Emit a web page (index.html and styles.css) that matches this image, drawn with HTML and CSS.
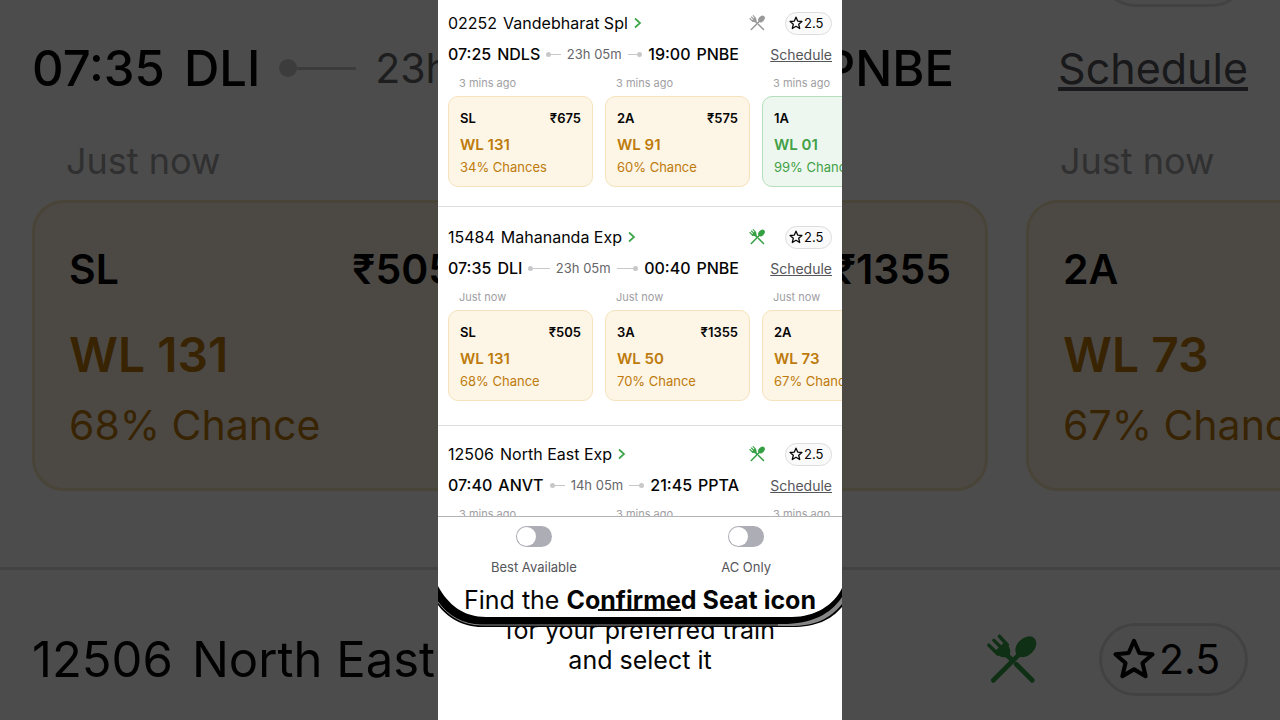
FILE: index.html
```
<!DOCTYPE html>
<html lang="en">
<head>
<meta charset="utf-8">
<title>Trains</title>
<link rel="stylesheet" href="styles.css">
</head>
<body>

<svg class="sprite" aria-hidden="true">
  <symbol id="food" viewBox="0 0 16 16">
    <path d="M.9 3.500 3.700 6.300M2.500 2l2.900 2.900M4.200.7l2.500 2.700" fill="none" stroke="currentColor" stroke-width="1.100" stroke-linecap="round"/>
    <path d="M2.800 5.400 5.800 2.500 6.800 3.500C7.800 4.600 7.800 5.800 7.200 7.100 5.700 7.500 4.600 7.300 3.700 6.500z" fill="currentColor"/>
    <path d="m6.300 6.300 1.300 1.300M9.500 9.500l5 5M2.300 14.500l8.200-8.200" fill="none" stroke="currentColor" stroke-width="1.500" stroke-linecap="round"/>
    <ellipse cx="12.500" cy="4" rx="2.700" ry="3.800" transform="rotate(45 12.500 4)" fill="currentColor"/>
  </symbol>
  <symbol id="star" viewBox="0 0 14 14">
    <path d="m7 1.200 1.700 3.900 4.200.4-3.200 2.800 1 4.200L7 10.300l-3.700 2.200 1-4.200L1.100 5.500l4.200-.4z" fill="none" stroke="currentColor" stroke-width="1.300" stroke-linejoin="round"/>
  </symbol>
  <symbol id="chevron" viewBox="0 0 8 12">
    <path d="m1 1.500 5 4.500-5 4.500" fill="none" stroke="currentColor" stroke-width="1.700"/>
  </symbol>
</svg>

<div class="backdrop" aria-hidden="true" inert>
  <article class="train">
    <div class="head">
      <span class="rating"></span>
    </div>
    <div class="times">
      <div class="route">
        <b>07:35</b> <b>DLI</b>
        <i class="leg"></i> <span class="duration">23h 05m</span> <i class="leg end"></i>
        <b>00:40</b> <b>PNBE</b>
      </div>
      <a class="schedule" href="#">Schedule</a>
    </div>
    <div class="classes">
      <div class="class">
        <span class="updated">Just now</span>
        <button class="card"><span class="fare"><span>SL</span><span>₹505</span></span><span class="status">WL 131</span><span class="chance">68% Chance</span></button>
      </div>
      <div class="class">
        <span class="updated">Just now</span>
        <button class="card"><span class="fare"><span>3A</span><span>₹1355</span></span><span class="status">WL 50</span><span class="chance">70% Chance</span></button>
      </div>
      <div class="class">
        <span class="updated">Just now</span>
        <button class="card"><span class="fare"><span>2A</span></span><span class="status">WL 73</span><span class="chance">67% Chance</span></button>
      </div>
    </div>
  </article>
  <article class="train">
    <div class="head">
      <a class="name" href="#"><span>12506</span> <span>North East Exp</span> <svg class="chevron"><use href="#chevron"/></svg></a>
      <svg class="food"><use href="#food"/></svg>
      <span class="rating"><svg class="star"><use href="#star"/></svg>2.5</span>
    </div>
  </article>
</div>

<main class="phone">
  <div class="feed">
    <article class="train">
      <div class="head">
        <a class="name" href="#"><span>02252</span> <span>Vandebharat Spl</span> <svg class="chevron"><use href="#chevron"/></svg></a>
        <svg class="food none"><use href="#food"/></svg>
        <span class="rating"><svg class="star"><use href="#star"/></svg>2.5</span>
      </div>
      <div class="times">
        <div class="route">
          <b>07:25</b> <b>NDLS</b>
          <i class="leg"></i> <span class="duration">23h 05m</span> <i class="leg end"></i>
          <b>19:00</b> <b>PNBE</b>
        </div>
        <a class="schedule" href="#">Schedule</a>
      </div>
      <div class="classes">
        <div class="class">
          <span class="updated">3 mins ago</span>
          <button class="card"><span class="fare"><span>SL</span><span>₹675</span></span><span class="status">WL 131</span><span class="chance">34% Chances</span></button>
        </div>
        <div class="class">
          <span class="updated">3 mins ago</span>
          <button class="card"><span class="fare"><span>2A</span><span>₹575</span></span><span class="status">WL 91</span><span class="chance">60% Chance</span></button>
        </div>
        <div class="class">
          <span class="updated">3 mins ago</span>
          <button class="card likely"><span class="fare"><span>1A</span></span><span class="status">WL 01</span><span class="chance">99% Chance</span></button>
        </div>
      </div>
    </article>

    <article class="train">
      <div class="head">
        <a class="name" href="#"><span>15484</span> <span>Mahananda Exp</span> <svg class="chevron"><use href="#chevron"/></svg></a>
        <svg class="food"><use href="#food"/></svg>
        <span class="rating"><svg class="star"><use href="#star"/></svg>2.5</span>
      </div>
      <div class="times">
        <div class="route">
          <b>07:35</b> <b>DLI</b>
          <i class="leg"></i> <span class="duration">23h 05m</span> <i class="leg end"></i>
          <b>00:40</b> <b>PNBE</b>
        </div>
        <a class="schedule" href="#">Schedule</a>
      </div>
      <div class="classes">
        <div class="class">
          <span class="updated">Just now</span>
          <button class="card"><span class="fare"><span>SL</span><span>₹505</span></span><span class="status">WL 131</span><span class="chance">68% Chance</span></button>
        </div>
        <div class="class">
          <span class="updated">Just now</span>
          <button class="card"><span class="fare"><span>3A</span><span>₹1355</span></span><span class="status">WL 50</span><span class="chance">70% Chance</span></button>
        </div>
        <div class="class">
          <span class="updated">Just now</span>
          <button class="card"><span class="fare"><span>2A</span></span><span class="status">WL 73</span><span class="chance">67% Chance</span></button>
        </div>
      </div>
    </article>

    <article class="train">
      <div class="head">
        <a class="name" href="#"><span>12506</span> <span>North East Exp</span> <svg class="chevron"><use href="#chevron"/></svg></a>
        <svg class="food"><use href="#food"/></svg>
        <span class="rating"><svg class="star"><use href="#star"/></svg>2.5</span>
      </div>
      <div class="times">
        <div class="route">
          <b>07:40</b> <b>ANVT</b>
          <i class="leg"></i> <span class="duration">14h 05m</span> <i class="leg end"></i>
          <b>21:45</b> <b>PPTA</b>
        </div>
        <a class="schedule" href="#">Schedule</a>
      </div>
      <div class="classes">
        <div class="class"><span class="updated">3 mins ago</span></div>
        <div class="class"><span class="updated">3 mins ago</span></div>
        <div class="class"><span class="updated">3 mins ago</span></div>
      </div>
    </article>
  </div>

  <div class="filters">
    <label><input type="checkbox" role="switch">Best Available</label>
    <label><input type="checkbox" role="switch">AC Only</label>
  </div>

  <div class="caption">
    <p>Find the <strong>Confirmed Seat icon</strong><br>for your preferred train<br>and select it</p>
    <!-- bottom edge of the handset -->
    <svg class="bezel" viewBox="0 0 404 44" preserveAspectRatio="none" aria-hidden="true">
      <path d="M0 1C10 20 26 32 48 32H354C377 32 396 20 404 3V22C393 35 378 42 354 42H44C24 42 9 32 0 20z" fill="#000"/>
      <path d="M0 17C10 31 25 40 44 40H344" fill="none" stroke="#8a8a8a" stroke-width="1"/>
      <path d="M340 39C372 40 392 30 404 12V19C392 34 377 41 352 41H340z" fill="#858585"/>
    </svg>
    <span class="home"></span>
  </div>
</main>

</body>
</html>
```
FILE: styles.css
```
:root {
  --edge: 10px;
  --title: 16px;
  --status: 15px;
  --text: 14px;
  --fare: 13px;
  --small: 11px;
  --gap: 6px;
  --head: 24px;
  --head-gap: 8px;
  --row: 22px;
  --row-gap: 10px;
  --updated: 16px;
  --updated-gap: 5px;
  --route: 291px;
  --card: 145px;
  --card-gap: 12px;
  --card-pad: 11px;
  --card-end: 8px;
  --fare-line: 20px;
  --fare-gap: 6px;
  --radius: 10px;
  --line: 1px;
  --food: 16px;
  --food-gap: 20px;
  --pill: 23px;
  --pill-width: 47px;
  --pill-pad: 3px;
  --star: 14px;
  --dot: 5px;
  --chevron: 8px;
  --chevron-height: 12px;
}
* {
  box-sizing: border-box;
}
body {
  margin: 0;
  height: 100vh;
  overflow: hidden;
  background: #fff;
  color: #050505;
  font-family: Inter, "Liberation Sans", sans-serif;
}
a {
  color: inherit;
  text-decoration: none;
}
.sprite {
  display: none;
}

/* enlarged copy of the list behind the phone */
.backdrop {
  --edge: 32px;
  --title: 49px;
  --status: 48px;
  --text: 43px;
  --fare: 41px;
  --small: 36px;
  --gap: 19px;
  --head: 76px;
  --head-gap: 25px;
  --row: 70px;
  --row-gap: 33px;
  --updated: 50px;
  --updated-gap: 14px;
  --route: 922px;
  --card: 459px;
  --card-gap: 38px;
  --card-pad: 34px;
  --card-end: 28px;
  --fare-line: 64px;
  --fare-gap: 19px;
  --radius: 32px;
  --line: 3px;
  --food: 51px;
  --food-gap: 62px;
  --pill: 73px;
  --pill-width: 149px;
  --pill-pad: 10px;
  --star: 44px;
  --dot: 18px;
  --chevron: 25px;
  --chevron-height: 38px;
  position: absolute;
  inset: 0;
  overflow: hidden;
}
.backdrop::after {
  content: "";
  position: absolute;
  inset: 0;
  background: rgba(0, 0, 0, 0.7);
}
.backdrop .train:first-child {
  margin-top: -68px;
  padding: 0 0 76px;
}
.backdrop .train:last-child {
  padding-top: 51px;
}

.phone {
  position: relative;
  display: flex;
  flex-direction: column;
  max-width: 404px;
  height: 100vh;
  margin: 0 auto;
  background: #fff;
}
.feed {
  flex: 1;
  min-height: 0;
  overflow: hidden;
}
.train {
  padding: 18px 0 24px;
  overflow: hidden;
}
.feed .train:first-child {
  padding: 11px 0 19px;
}
.feed .train:last-child {
  padding-top: 16px;
}
.train + .train {
  border-top: var(--line) solid #dedede;
}
.head, .times {
  display: flex;
  align-items: center;
  padding: 0 var(--edge);
  white-space: nowrap;
}
.head {
  height: var(--head);
  margin-bottom: var(--head-gap);
}
.name {
  display: flex;
  align-items: center;
  gap: var(--gap);
  font-size: var(--title);
}
.chevron {
  width: var(--chevron);
  height: var(--chevron-height);
  color: #3fa549;
}
.food {
  width: var(--food);
  height: var(--food);
  margin-left: auto;
  margin-right: var(--food-gap);
  color: #35a043;
}
.food.none {
  color: #999;
}
.rating {
  display: flex;
  align-items: center;
  gap: var(--line);
  width: var(--pill-width);
  height: var(--pill);
  padding-left: var(--pill-pad);
  border: var(--line) solid #ddd;
  border-radius: var(--pill);
  background: #fafafa;
  font-size: var(--fare);
}
.rating:only-child {
  margin-left: auto;
}
.star {
  width: var(--star);
  height: var(--star);
}
.times {
  height: var(--row);
  margin-bottom: var(--row-gap);
  justify-content: space-between;
}
.route {
  display: flex;
  align-items: center;
  gap: var(--gap);
  width: var(--route);
}
.route b {
  font-size: var(--title);
  font-weight: 500;
}
.duration {
  color: #66666a;
  font-size: var(--fare);
}
.leg {
  display: flex;
  flex: 1;
  align-items: center;
}
.leg::before {
  content: "";
  width: var(--dot);
  height: var(--dot);
  border-radius: 50%;
  background: #c8c8ca;
}
.leg::after {
  content: "";
  flex: 1;
  height: var(--line);
  background: #c8c8ca;
}
.leg.end {
  flex-direction: row-reverse;
}
.schedule {
  color: #55555a;
  font-size: var(--text);
  text-decoration: underline;
}
.classes {
  display: flex;
  gap: var(--card-gap);
  padding-left: var(--edge);
}
.class {
  flex: none;
  width: var(--card);
}
.updated {
  display: block;
  margin: 0 0 var(--updated-gap) var(--card-pad);
  color: #a0a0a3;
  font-size: var(--small);
  line-height: var(--updated);
}
.card {
  display: block;
  width: 100%;
  padding: var(--card-pad) var(--card-pad) var(--card-end);
  border: var(--line) solid #f6e3bd;
  border-radius: var(--radius);
  background: #fdf5e6;
  color: #bd7b0c;
  font: inherit;
  text-align: left;
  white-space: nowrap;
}
.card.likely {
  border-color: #b5dfbc;
  background: #edf7ef;
  color: #43a047;
}
.fare {
  display: flex;
  justify-content: space-between;
  margin-bottom: var(--fare-gap);
  color: #050505;
  font-size: var(--fare);
  font-weight: 600;
  line-height: var(--fare-line);
}
.status, .chance {
  display: block;
  font-size: var(--fare);
  line-height: var(--row);
}
.status {
  font-size: var(--status);
  font-weight: 600;
}

.filters {
  display: flex;
  justify-content: space-between;
  padding: 9px 71px 0 53px;
  border-top: 1px solid #b4b4b6;
}
.filters label {
  display: flex;
  flex-direction: column;
  align-items: center;
  gap: 10px;
  color: #55555a;
  font-size: 13px;
  line-height: 20px;
}
.filters input {
  appearance: none;
  width: 36px;
  height: 21px;
  margin: 0;
  padding: 1px;
  border-radius: 11px;
  background: #adadb5;
}
.filters input::before {
  content: "";
  display: block;
  width: 19px;
  height: 19px;
  border-radius: 50%;
  background: #fff;
}
.filters input:checked::before {
  margin-left: auto;
}

.caption {
  position: relative;
  padding: 8px 0 45px;
  overflow: hidden;
  text-align: center;
}
.caption p {
  margin: 0;
  font-size: 25px;
  line-height: 30px;
}
.bezel {
  position: absolute;
  top: 8px;
  left: 0;
  width: 100%;
  height: 44px;
}
.home {
  position: absolute;
  top: 32px;
  left: 50%;
  width: 83px;
  height: 2px;
  margin-left: -42px;
  background: #111;
}
```
